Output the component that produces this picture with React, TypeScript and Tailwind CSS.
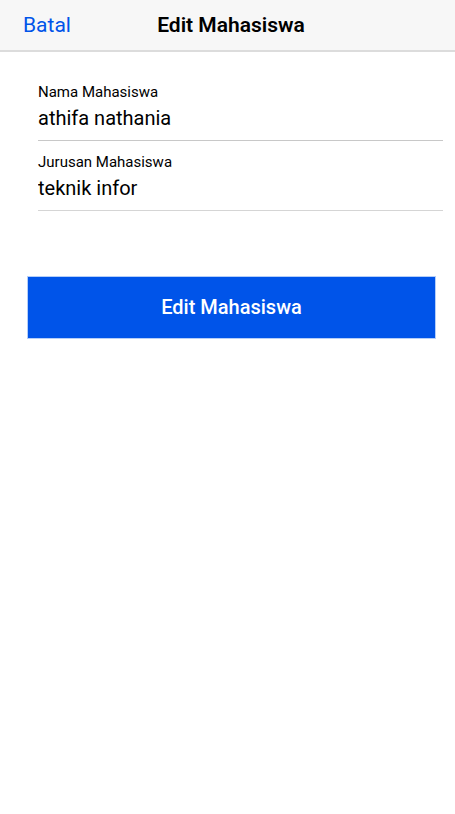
export default function App() {
  return (
    <div className="min-h-screen bg-white text-black" style={{ fontFamily: 'Roboto, sans-serif' }}>
      <header className="grid h-13 grid-cols-[1fr_auto_1fr] items-center border-b-2 border-[#dcdcdc] bg-[#f7f7f7] pl-[23px] pr-4">
        <button type="button" className="justify-self-start text-[21px] leading-6 text-[#0054e9]">Batal</button>
        <h1 className="text-[21px] font-semibold leading-6">Edit Mahasiswa</h1>
      </header>
      <form className="pt-8" onSubmit={(e) => e.preventDefault()}>
        <div className="ml-[38px] mr-3 border-b border-[#c8c8c8] pb-1">
          <label htmlFor="nama" className="block text-[15px] leading-4">Nama Mahasiswa</label>
          <input id="nama" defaultValue="athifa nathania" className="block h-9 w-full bg-transparent text-[20px] outline-none" />
        </div>
        <div className="ml-[38px] mr-3 border-b border-[#d5d5d5] pt-[13px] pb-1">
          <label htmlFor="jurusan" className="block text-[15px] leading-4">Jurusan Mahasiswa</label>
          <input id="jurusan" defaultValue="teknik infor" className="block h-9 w-full bg-transparent text-[20px] outline-none" />
        </div>
        <div className="ml-[27px] mr-[19px] pt-[65px]">
          <button type="submit" className="block h-[63px] w-full border border-[#b5cef8] bg-[#0054e9] pb-0.5 text-[20px] font-medium text-white">Edit Mahasiswa</button>
        </div>
      </form>
    </div>
  );
}
